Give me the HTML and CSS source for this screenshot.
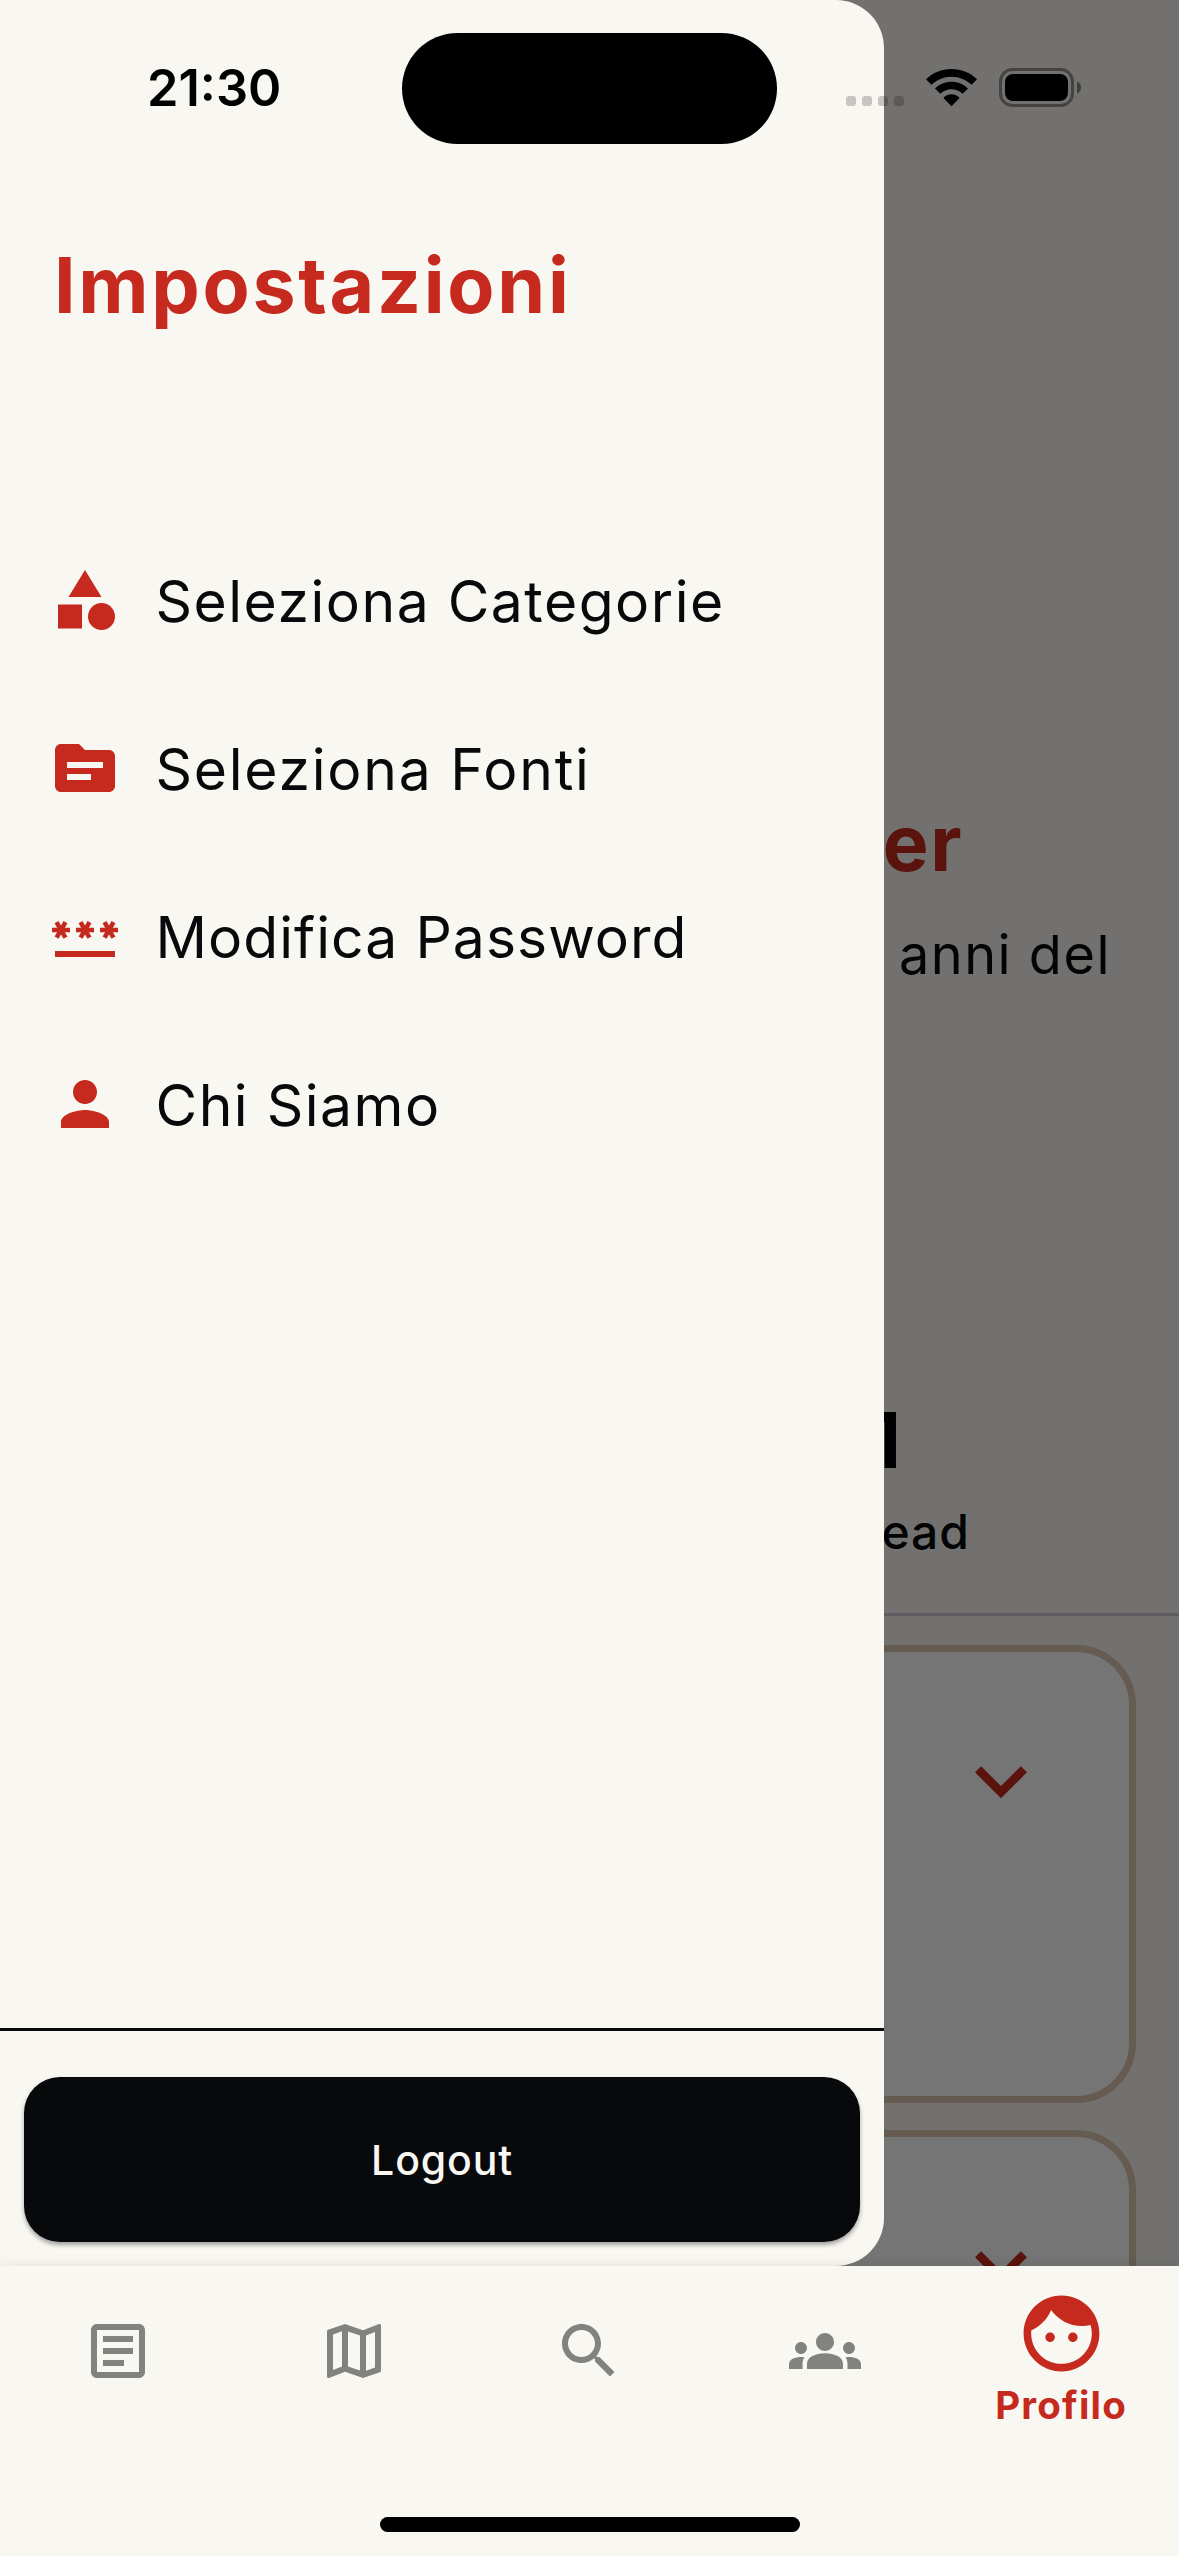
FILE: index.html
```html
<!DOCTYPE html>
<html lang="it">
<head>
<meta charset="utf-8">
<title>Impostazioni</title>
<link rel="stylesheet" href="styles.css">
</head>
<body>
<div class="screen">
  <div class="stage">
    <main class="page">
      <h2 class="name">er</h2>
      <p class="bio">anni del</p>
      <div class="count">1</div>
      <div class="count-label">ead</div>
      <div class="cards">
        <section class="card">
          <svg class="chevron" viewBox="0 0 24 24"><path d="M16.59 8.59 12 13.17 7.41 8.59 6 10l6 6 6-6z"/></svg>
        </section>
        <section class="card">
          <svg class="chevron" viewBox="0 0 24 24"><path d="M16.59 8.59 12 13.17 7.41 8.59 6 10l6 6 6-6z"/></svg>
        </section>
      </div>
    </main>
    <div class="scrim"></div>
    <aside class="drawer">
      <h1 class="title">Impostazioni</h1>
      <ul class="menu">
        <li class="item">
          <svg class="item-icon" viewBox="0 0 24 24"><path d="M12 2 6.5 11h11zM3 13.5h8v8H3z"/><circle cx="17.5" cy="17.5" r="4.5"/></svg>
          <span class="label">Seleziona Categorie</span>
        </li>
        <li class="item">
          <svg class="item-icon" viewBox="0 0 24 24"><path d="M20 6h-8l-2-2H4c-1.1 0-2 .9-2 2v12c0 1.1.9 2 2 2h16c1.1 0 2-.9 2-2V8c0-1.1-.9-2-2-2zm-6 10H6v-2h8v2zm4-4H6v-2h12v2z"/></svg>
          <span class="label label-fonti">Seleziona Fonti</span>
        </li>
        <li class="item">
          <svg class="item-icon" viewBox="0 0 24 24"><path d="M2 17h20v2H2v-2zm1.15-4.05L4 11.47l.85 1.48 1.3-.75-.85-1.48H7v-1.5H5.3l.85-1.47L4.85 7 4 8.47 3.15 7l-1.3.75.85 1.47H1v1.5h1.7l-.85 1.48 1.3.75zm6.7-.75l1.3.75.85-1.48.85 1.48 1.3-.75-.85-1.48H15v-1.5h-1.7l.85-1.47-1.3-.75L12 8.47 11.15 7l-1.3.75.85 1.47H9v1.5h1.7l-.85 1.48zM23 9.22h-1.7l.85-1.47-1.3-.75L20 8.47 19.15 7l-1.3.75.85 1.47H17v1.5h1.7l-.85 1.48 1.3.75.85-1.48.85 1.48 1.3-.75-.85-1.48H23v-1.5z"/></svg>
          <span class="label label-password">Modifica Password</span>
        </li>
        <li class="item">
          <svg class="item-icon" viewBox="0 0 24 24"><path d="M12 12c2.21 0 4-1.79 4-4s-1.79-4-4-4-4 1.79-4 4 1.79 4 4 4zm0 2c-2.67 0-8 1.34-8 4v2h16v-2c0-2.66-5.33-4-8-4z"/></svg>
          <span class="label">Chi Siamo</span>
        </li>
      </ul>
      <div class="drawer-footer">
        <button class="logout">Logout</button>
      </div>
    </aside>
  </div>

  <nav class="tabs">
    <div class="tab-row">
      <div class="tab"><svg class="tab-icon" viewBox="0 0 24 24"><path d="M19 5v14H5V5h14m0-2H5c-1.1 0-2 .9-2 2v14c0 1.1.9 2 2 2h14c1.1 0 2-.9 2-2V5c0-1.1-.9-2-2-2zM14 17H7v-2h7v2zm3-4H7v-2h10v2zm0-4H7V7h10v2z"/></svg></div>
      <div class="tab"><svg class="tab-icon" viewBox="0 0 24 24"><path d="M20.5 3l-.16.03L15 5.1 9 3 3.36 4.9c-.21.07-.36.25-.36.48V20.5c0 .28.22.5.5.5l.16-.03L9 18.9l6 2.1 5.64-1.9c.21-.07.36-.25.36-.48V3.5c0-.28-.22-.5-.5-.5zM10 5.47l4 1.4v11.66l-4-1.4V5.47zm-5 .99l3-1.01v11.7l-3 1.16V6.46zm14 11.08l-3 1.01V6.86l3-1.16v11.84z"/></svg></div>
      <div class="tab"><svg class="tab-icon" viewBox="0 0 24 24"><path d="M15.5 14h-.79l-.28-.27C15.41 12.59 16 11.11 16 9.5 16 5.91 13.09 3 9.5 3S3 5.91 3 9.5 5.91 16 9.5 16c1.61 0 3.09-.59 4.23-1.57l.27.28v.79l5 4.99L20.49 19l-4.99-5zm-6 0C7.01 14 5 11.99 5 9.5S7.01 5 9.5 5 14 7.01 14 9.5 11.99 14 9.5 14z"/></svg></div>
      <div class="tab"><svg class="tab-icon" viewBox="0 0 24 24"><path d="M12 12.75c1.63 0 3.07.39 4.24.9 1.08.48 1.76 1.56 1.76 2.73V18H6v-1.61c0-1.18.68-2.26 1.76-2.73 1.17-.52 2.61-.91 4.24-.91zM4 13c1.1 0 2-.9 2-2s-.9-2-2-2-2 .9-2 2 .9 2 2 2zm1.13 1.1c-.37-.06-.74-.1-1.13-.1-.99 0-1.93.21-2.78.58C.48 14.9 0 15.62 0 16.43V18h4.5v-1.61c0-.83.23-1.61.63-2.29zM20 13c1.1 0 2-.9 2-2s-.9-2-2-2-2 .9-2 2 .9 2 2 2zm4 3.43c0-.81-.48-1.53-1.22-1.85-.85-.37-1.79-.58-2.78-.58-.39 0-.76.04-1.13.1.4.68.63 1.46.63 2.29V18H24v-1.57zM12 6c1.66 0 3 1.34 3 3s-1.34 3-3 3-3-1.34-3-3 1.34-3 3-3z"/></svg></div>
      <div class="tab active">
        <svg class="tab-icon" viewBox="0 0 24 24"><path d="M9 11.75c-.69 0-1.25.56-1.25 1.25s.56 1.25 1.25 1.25 1.25-.56 1.25-1.25-.56-1.25-1.25-1.25zm6 0c-.69 0-1.25.56-1.25 1.25s.56 1.25 1.25 1.25 1.25-.56 1.25-1.25-.56-1.25-1.25-1.25zM12 2C6.48 2 2 6.48 2 12s4.48 10 10 10 10-4.48 10-10S17.52 2 12 2zm0 18c-4.41 0-8-3.59-8-8 0-.29.02-.58.05-.86 2.36-1.05 4.23-2.98 5.21-5.37C11.07 8.33 14.05 10 17.42 10c.78 0 1.53-.09 2.25-.26.21.71.33 1.47.33 2.26 0 4.41-3.59 8-8 8z"/></svg>
        <span class="tab-label">Profilo</span>
      </div>
    </div>
    <div class="home-indicator"></div>
  </nav>

  <header class="status">
    <span class="clock">21:30</span>
    <span class="island"></span>
    <span class="signal"><i></i><i></i><i></i><i></i></span>
    <svg class="wifi" viewBox="0 0 51 38"><path d="M25.500 0C35.300 0 44.200 3.600 51 10.300L45.600 15.800C40.200 10.700 33.200 7.700 25.500 7.700S10.800 10.700 5.400 15.800L0 10.300C6.800 3.600 15.700 0 25.500 0zM25.500 12.800C31.800 12.800 37.500 15.200 42 19.500L36.600 24.800C33.600 22 29.800 20.300 25.500 20.300S17.400 22 14.400 24.800L9 19.500C13.500 15.200 19.200 12.800 25.500 12.800zM25.500 25.300C28.300 25.300 31 26.400 33.100 28.300C33.500 28.700 33.500 29.200 33.100 29.600L25.500 37.200L17.900 29.600C17.500 29.200 17.500 28.700 17.900 28.300C20 26.400 22.700 25.300 25.500 25.300z"/></svg>
    <svg class="battery" viewBox="0 0 82 39"><rect x="1.500" y="1.500" width="72" height="36" rx="12" fill="none" stroke="#000" stroke-width="3" opacity=".4"/><rect x="6" y="6" width="63" height="27" rx="8"/><path d="M78 13.500c2.500 1 4 3.300 4 6s-1.500 5-4 6z" opacity=".45"/></svg>
  </header>
</div>
</body>
</html>
```
FILE: styles.css
```css
:root {
  --paper: #f9f7f2;
  --ink: #07090b;
  --red: #c62a1e;
}

* { box-sizing: border-box; margin: 0; padding: 0; }

body {
  background: var(--paper);
  color: var(--ink);
  font-family: Inter, "Liberation Sans", sans-serif;
  overflow: hidden;
}

svg { display: block; flex: none; }

.screen {
  position: relative;
  display: flex;
  flex-direction: column;
  width: 1179px;
  height: 2556px;
}

.stage {
  position: relative;
  height: 2266px;
  overflow: hidden;
}

/* profile page behind the drawer */
.page {
  display: flex;
  flex-direction: column;
  align-items: flex-end;
  padding-top: 795px;
}

.name {
  padding-right: 216px;
  color: var(--red);
  font-size: 77px;
  font-weight: 700;
  line-height: 96px;
  letter-spacing: 1.5px;
}

.bio {
  margin-top: 28px;
  padding-right: 68px;
  font-size: 54px;
  line-height: 72px;
  letter-spacing: 1.5px;
}

.count {
  margin-top: 401px;
  padding-right: 278px;
  color: #000;
  font-size: 76.5px;
  font-weight: 700;
  line-height: 96px;
}

.count-label {
  margin-top: 14px;
  padding-right: 209px;
  font-size: 48px;
  font-weight: 500;
  line-height: 60px;
  letter-spacing: 1px;
}

.cards {
  align-self: stretch;
  display: flex;
  flex-direction: column;
  gap: 27px;
  margin-top: 51px;
  padding: 29px 43px 0;
  border-top: 3px solid #ccc8d1;
}

.card {
  display: flex;
  justify-content: flex-end;
  height: 458px;
  padding: 77px 76px 0 0;
  border: 7px solid #dec6b0;
  border-radius: 60px;
  background: #fff;
}

.chevron { width: 104px; height: 104px; fill: var(--red); }

.scrim {
  position: absolute;
  inset: 0;
  background: rgba(0, 0, 0, .54);
}

/* drawer */
.drawer {
  position: absolute;
  inset: 0 auto 0 0;
  display: flex;
  flex-direction: column;
  width: 884.25px;
  padding-top: 237px;
  border-radius: 0 48px 48px 0;
  background: var(--paper);
}

.title {
  padding-left: 54px;
  color: var(--red);
  font-size: 77px;
  font-weight: 700;
  line-height: 96px;
  letter-spacing: 2.7px;
}

.menu { margin-top: 183px; list-style: none; }

.item {
  display: flex;
  align-items: center;
  gap: 35px;
  height: 168px;
  padding-left: 48.500px;
}

.item-icon { width: 72px; height: 72px; fill: var(--red); }

.label {
  padding-top: 3px;
  font-size: 57px;
  line-height: 72px;
  letter-spacing: 1.5px;
}

.label-fonti { letter-spacing: 1.75px; }
.label-password { letter-spacing: 1.05px; }

.drawer-footer {
  margin-top: auto;
  padding: 46px 24px 24px;
  border-top: 3px solid var(--ink);
}

.logout {
  display: block;
  width: 100%;
  height: 165px;
  border: 0;
  border-radius: 36px;
  background: var(--ink);
  color: var(--paper);
  font: 500 41px/60px Inter, "Liberation Sans", sans-serif;
  letter-spacing: .9px;
  box-shadow: 0 3px 4px rgba(0, 0, 0, .35);
}

/* bottom tabs */
.tabs {
  position: relative;
  display: flex;
  flex-direction: column;
  align-items: center;
  height: 290px;
  background: var(--paper);
  box-shadow: 0 0 12px rgba(0, 0, 0, .1);
}

.tab-row {
  align-self: stretch;
  display: grid;
  grid-template-columns: repeat(5, 1fr);
  height: 251px;
}

.tab {
  display: flex;
  flex-direction: column;
  align-items: center;
  padding-top: 49px;
}

.tab-icon { width: 72px; height: 72px; fill: #82827f; }

.active { padding-top: 22px; color: var(--red); }
.active .tab-icon { width: 91px; height: 91px; fill: var(--red); }

.tab-label {
  margin-top: 2px;
  font-size: 38.500px;
  font-weight: 700;
  line-height: 48px;
  letter-spacing: 1.2px;
}

.home-indicator {
  width: 420px;
  height: 15px;
  border-radius: 8px;
  background: #000;
}

/* system status bar */
.status {
  position: absolute;
  inset: 0 0 auto 0;
  display: flex;
  align-items: flex-start;
  height: 177px;
  padding-top: 33px;
  color: #000;
}

.clock {
  width: 402px;
  padding: 24px 0 0 147px;
  font-size: 50.500px;
  font-weight: 600;
  line-height: 62px;
}

.island {
  width: 375px;
  height: 111px;
  border-radius: 56px;
  background: #000;
}

.signal { display: flex; gap: 6px; margin: 63px 0 0 69px; }
.signal i { width: 10px; height: 10px; border-radius: 3px; background: rgba(0, 0, 0, .2); }

.wifi { width: 51px; height: 38px; margin: 36px 0 0 22px; }
.battery { width: 82px; height: 39px; margin: 35px 0 0 22px; }
```
